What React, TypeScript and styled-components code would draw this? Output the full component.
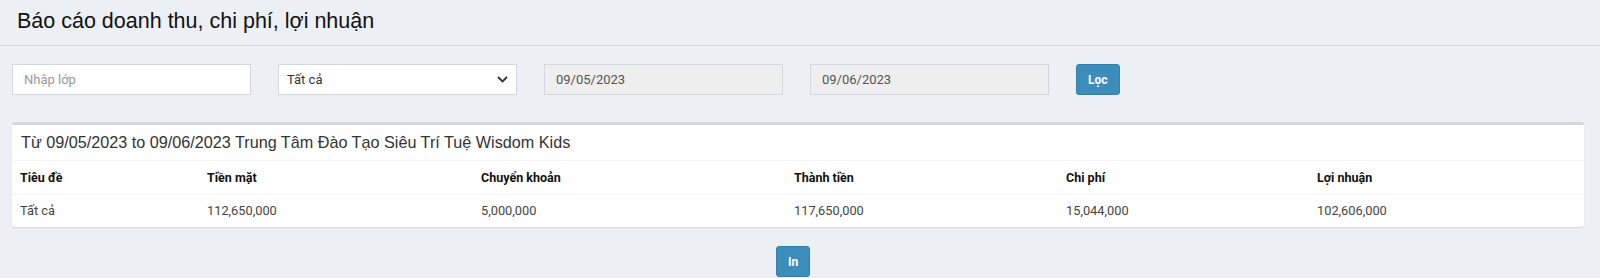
import styled, { createGlobalStyle } from "styled-components";

const GlobalStyle = createGlobalStyle`
  html, body {
    margin: 0;
    padding: 0;
    background: #ecf0f5;
  }
  body {
    font-family: Roboto, "Liberation Sans", Arial, sans-serif;
    font-size: 13px;
    color: #333;
  }
  * {
    box-sizing: border-box;
  }
`;

const columns = [
  { title: "Tiêu đề", width: 187 },
  { title: "Tiền mặt", width: 274 },
  { title: "Chuyển khoản", width: 313 },
  { title: "Thành tiền", width: 272 },
  { title: "Chi phí", width: 251 },
  { title: "Lợi nhuận", width: 275 },
];

const rows = [
  ["Tất cả", "112,650,000", "5,000,000", "117,650,000", "15,044,000", "102,606,000"],
];

const Report = () => {
  return (
    <Page>
      <GlobalStyle />
      <Header>
        <Title>Báo cáo doanh thu, chi phí, lợi nhuận</Title>
      </Header>

      <Filters>
        <Field>
          <Input type="text" placeholder="Nhập lớp" />
        </Field>
        <Field>
          <SelectBox>
            <span>Tất cả</span>
            <svg width="11" height="7" viewBox="0 0 11 7">
              <path d="M1 1 L5.5 5.5 L10 1" fill="none" stroke="#333" strokeWidth="1.8" />
            </svg>
          </SelectBox>
        </Field>
        <Field>
          <Input type="text" value="09/05/2023" readOnly disabled />
        </Field>
        <Field>
          <Input type="text" value="09/06/2023" readOnly disabled />
        </Field>
        <Button>Lọc</Button>
      </Filters>

      <Box>
        <BoxHeader>
          <BoxTitle>
            Từ 09/05/2023 to 09/06/2023 Trung Tâm Đào Tạo Siêu Trí Tuệ Wisdom Kids
          </BoxTitle>
        </BoxHeader>
        <Table>
          <thead>
            <tr>
              {columns.map((c) => (
                <Th key={c.title} $w={c.width}>{c.title}</Th>
              ))}
            </tr>
          </thead>
          <tbody>
            {rows.map((r, i) => (
              <tr key={i}>
                {r.map((cell, j) => (
                  <Td key={j}>{cell}</Td>
                ))}
              </tr>
            ))}
          </tbody>
        </Table>
      </Box>

      <PrintRow>
        <Button>In</Button>
      </PrintRow>
    </Page>
  );
};

const Page = styled.div`
  width: 1600px;
  height: 278px;
  background: #ecf0f5;
  overflow: hidden;
`;

const Header = styled.div`
  height: 46px;
  display: flex;
  align-items: center;
  padding: 0 17px 2px;
  border-bottom: 1px solid #d2d6de;
`;

const Title = styled.h1`
  margin: 0;
  font-family: "Liberation Sans", Arial, sans-serif;
  font-size: 21.5px;
  font-weight: 400;
  color: #111;
`;

const Filters = styled.div`
  display: flex;
  align-items: center;
  gap: 27px;
  padding: 18px 12px 0;
`;

const Field = styled.div`
  width: 239px;
`;

const Input = styled.input`
  width: 100%;
  height: 31px;
  padding: 6px 11px;
  border: 1px solid #d2d6de;
  background: #fff;
  font-family: Roboto, "Liberation Sans", Arial, sans-serif;
  font-size: 13px;
  color: #555;
  outline: none;

  &::placeholder {
    color: #999;
  }

  &:disabled {
    background: #eee;
    color: #555;
    -webkit-text-fill-color: #555;
    opacity: 1;
  }
`;

const SelectBox = styled.div`
  height: 31px;
  display: flex;
  align-items: center;
  justify-content: space-between;
  padding: 0 8px 0 8px;
  border: 1px solid #d2d6de;
  background: #fff;
  color: #333;
  font-size: 13px;
`;

const Button = styled.button`
  height: 31px;
  padding: 0 11px;
  border: 1px solid #367fa9;
  border-radius: 3px;
  background: #3c8dbc;
  color: #fff;
  font-family: Roboto, "Liberation Sans", Arial, sans-serif;
  font-size: 12px;
  font-weight: 700;
  cursor: pointer;
`;

const Box = styled.div`
  margin: 27px 16px 0 12px;
  background: #fff;
  border-top: 3px solid #d2d6de;
  border-radius: 3px;
  box-shadow: 0 1px 1px rgba(0, 0, 0, 0.1);
`;

const BoxHeader = styled.div`
  height: 36px;
  display: flex;
  align-items: center;
  padding: 0 9px;
  border-bottom: 1px solid #f4f4f4;
`;

const BoxTitle = styled.h3`
  margin: 0;
  font-family: "Liberation Sans", Arial, sans-serif;
  font-size: 16.2px;
  font-weight: 400;
  color: #333;
`;

const Table = styled.table`
  width: 100%;
  border-collapse: collapse;
  table-layout: fixed;
`;

const Th = styled.th<{ $w: number }>`
  width: ${(p) => p.$w}px;
  height: 33px;
  padding: 0 8px;
  text-align: left;
  font-weight: 700;
  font-size: 12.5px;
  color: #111;
  border-bottom: 1px solid #f4f4f4;
`;

const Td = styled.td`
  height: 33px;
  padding: 0 8px;
  font-size: 12.8px;
  color: #444;
`;

const PrintRow = styled.div`
  display: flex;
  justify-content: center;
  padding: 19px 26px 0 12px;
`;

export default Report;
